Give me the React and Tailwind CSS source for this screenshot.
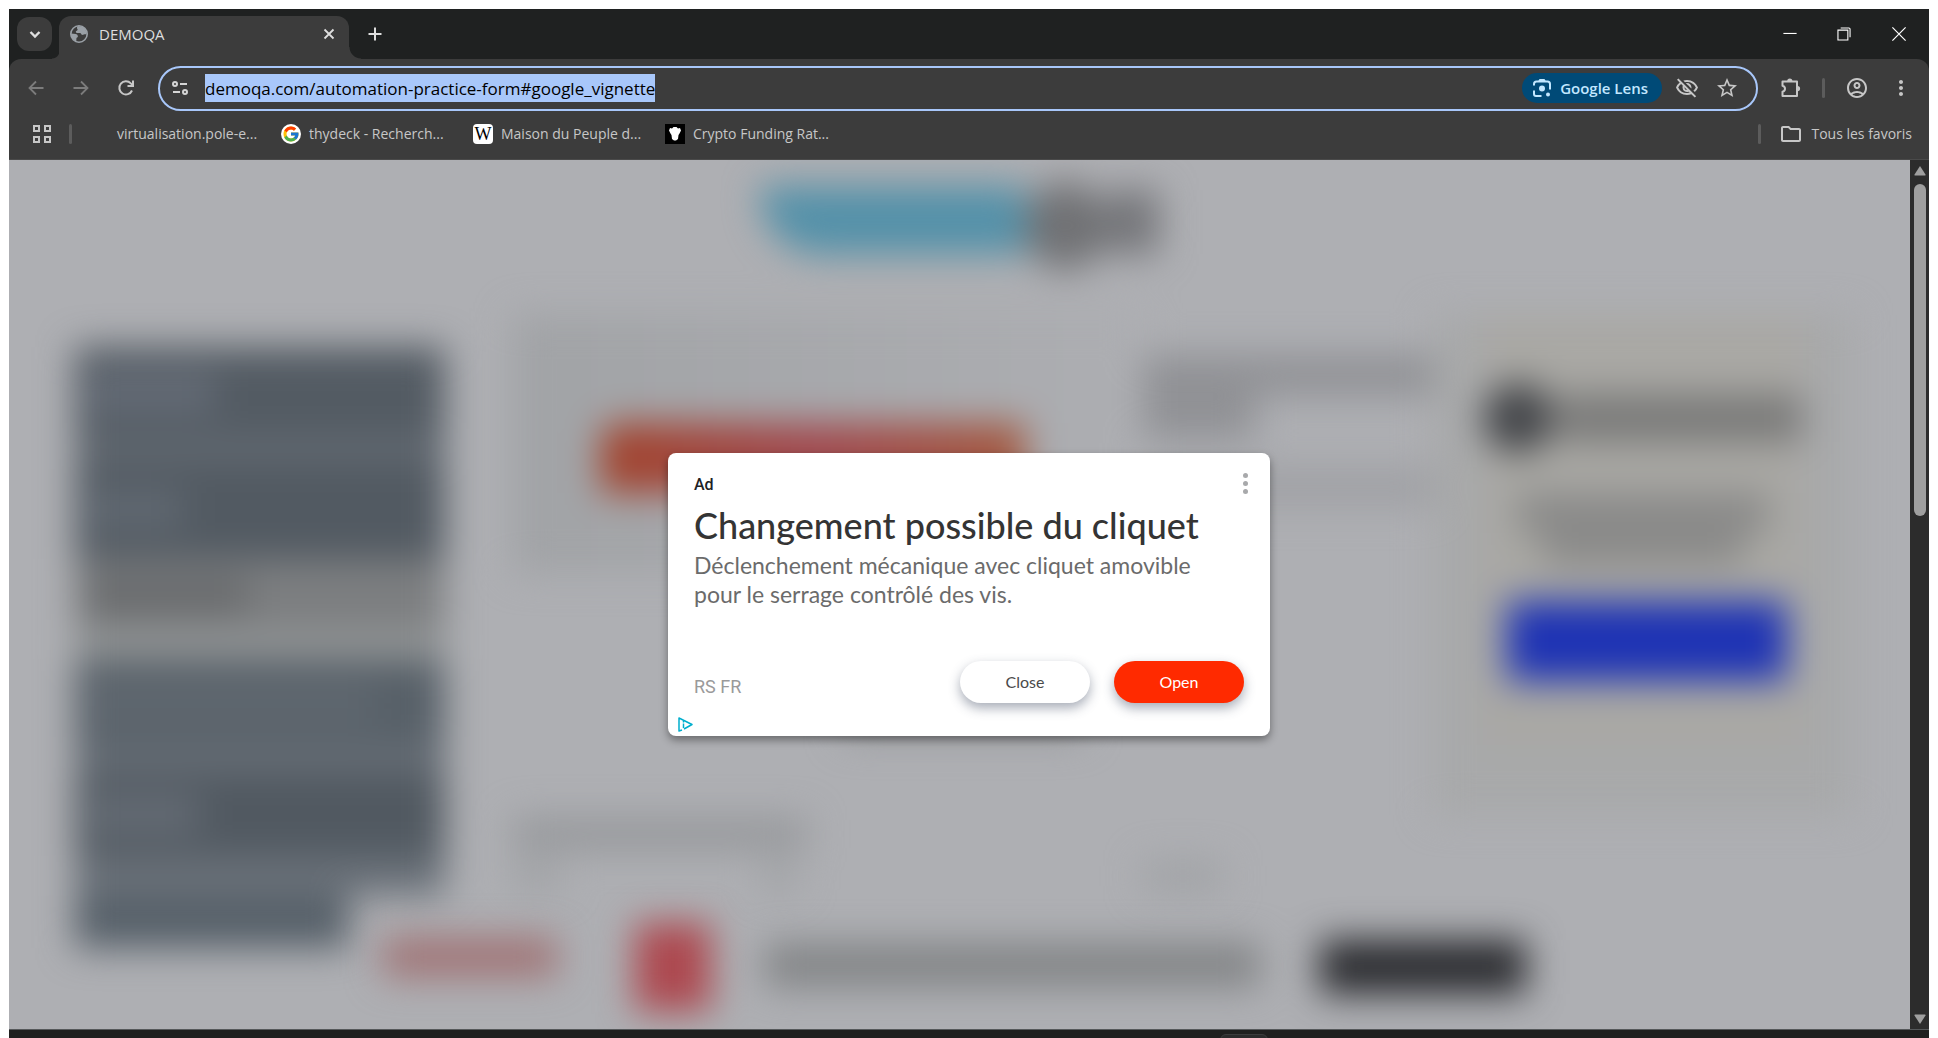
import React from "react";
import { FcGoogle } from "react-icons/fc";
import { MdMoreVert, MdOutlineAccountCircle, MdOutlineFolder, MdOutlineVisibilityOff, MdStarBorder } from "react-icons/md";

const ui = "font-['Open_Sans','Noto_Sans',sans-serif]";

function Line({ d, size = 20, w = 2, className = "" }) {
  return (
    <svg width={size} height={size} viewBox="0 0 20 20" fill="none" stroke="currentColor" strokeWidth={w} className={className} aria-hidden="true">
      <path d={d} />
    </svg>
  );
}

function Globe() {
  return (
    <svg width="18" height="18" viewBox="0 0 18 18" aria-hidden="true">
      <circle cx="9" cy="9" r="8.2" fill="#3c3c3c" stroke="#9aa0a6" strokeWidth="1.6" />
      <path fill="#9aa0a6" d="M8 1c-1 1-1.500 2-.6 3 .8.900-.4 1.600-1.200 2.100-.8.500-.2 1.900.8 1.900h3c1.200 0 1 1.500 2 1.800 1.300.4 2-.8 4.500-.4C17 4.500 13.500 1 8 1ZM1 8.500l4.500.5c1.500.2 2.500 1.200 2.400 2.600 0 1-1.400.8-1.500 2-.1.900.2 1.900-.2 3C3 15.500 1 12.500 1 8.500Z" />
    </svg>
  );
}

function Lens() {
  return (
    <svg width="20" height="20" viewBox="0 0 20 20" fill="none" stroke="currentColor" strokeWidth="2" aria-hidden="true">
      <path d="M2 7.500V6a2.500 2.500 0 0 1 2.500-2.500h11A2.500 2.500 0 0 1 18 6v5.500M2 12.500V16a2 2 0 0 0 2 2h5.500" />
      <path d="M6 3.500L7.500 1h5L14 3.500Z" fill="currentColor" stroke="none" />
      <circle cx="10" cy="10.500" r="3" fill="currentColor" stroke="none" />
      <circle cx="16" cy="16.500" r="2" fill="currentColor" stroke="none" />
    </svg>
  );
}

function Tune() {
  return (
    <svg width="18" height="18" viewBox="0 0 18 18" fill="none" stroke="#d5d5d5" strokeWidth="2" aria-hidden="true">
      <circle cx="4" cy="5" r="2" />
      <path d="M9 5h7M2 13h7" />
      <circle cx="14" cy="13" r="2" />
    </svg>
  );
}

function Sep() {
  return <span className="h-5 w-[3px] rounded-full bg-[#5c5c5c]" />;
}

function TabStrip() {
  return (
    <div className="flex h-[50px] bg-[#1f2121] pl-2 text-[#dedede]">
      <button aria-label="Rechercher dans les onglets" className="mt-2 flex h-[34px] w-[35px] items-center justify-center rounded-xl bg-[#3c3c3c]">
        <Line d="M5.500 8l4.500 4.500L14.500 8" w={2.4} />
      </button>
      <div className="flex items-end">
        <span className="h-2 w-[7px] bg-[radial-gradient(circle_at_0_0,transparent_7px,#3c3c3c_8px)]" />
        <div className="flex h-[43px] w-[290px] items-center rounded-t-xl bg-[#3c3c3c] pb-[7px] pl-[11px] pr-[10px]">
          <Globe />
          <span className="ml-[11px] flex-1 text-[15px] leading-5">DEMOQA</span>
          <button aria-label="Fermer l'onglet">
            <Line d="M5.500 5.500l9 9M14.500 5.500l-9 9" w={1.8} />
          </button>
        </div>
        <span className="h-3 w-3 bg-[radial-gradient(circle_at_100%_0,transparent_11px,#3c3c3c_12px)]" />
      </div>
      <button aria-label="Nouvel onglet" className="ml-1 h-[50px]">
        <Line d="M10 3.500v13M3.500 10h13" w={2} />
      </button>
      <div className="ml-auto flex h-[50px] gap-8 pr-[18px] text-white">
        <button aria-label="Réduire">
          <Line d="M4 9.500h12" w={1} size={22} />
        </button>
        <button aria-label="Restaurer">
          <Line d="M4.500 6.500h9v9h-9zM7 4.500h7.500q1 0 1 1V13" w={1} size={22} />
        </button>
        <button aria-label="Fermer">
          <Line d="M4.500 4.500l11 11M15.500 4.500l-11 11" w={1} size={24} />
        </button>
      </div>
    </div>
  );
}

function Toolbar() {
  return (
    <div className="flex h-[58px] items-center rounded-t-xl bg-[#3c3c3c] pl-[17px] pr-4 text-[#c7c7c7]">
      <div className="flex gap-[25px]">
        <button aria-label="Retour" className="text-[#7c7c7c]">
          <Line d="M17.500 10H4M10 3.500L3.500 10l6.500 6.500" w={1.8} />
        </button>
        <button aria-label="Avancer" className="text-[#7c7c7c]">
          <Line d="M2.500 10H16M10 3.500l6.500 6.500-6.500 6.500" w={1.8} />
        </button>
        <button aria-label="Actualiser">
          <Line d="M16 12.500A6.600 6.600 0 1 1 14.800 5.400L17 7.600M17 2.500V8h-5.500" w={2} />
        </button>
      </div>
      <div className="ml-[22px] flex h-[45px] flex-1 items-center rounded-full border-2 border-[#a8c7fa] pl-[11px] pr-[17px]">
        <button aria-label="Informations sur le site">
          <Tune />
        </button>
        <input
          aria-label="Adresse"
          readOnly
          value="demoqa.com/automation-practice-form#google_vignette"
          className="ml-4 h-7 bg-[#a8c7fa] text-[17px] text-black [field-sizing:content]"
        />
        <button className="ml-auto flex h-[30px] items-center gap-2 rounded-full bg-[#004a77] pl-[10px] pr-[14px] text-[15px] font-semibold text-[#c2e7ff]">
          <Lens />
          Google Lens
        </button>
        <button aria-label="Cookies tiers bloqués" className="ml-[13px]">
          <MdOutlineVisibilityOff size={24} />
        </button>
        <button aria-label="Ajouter aux favoris" className="ml-4">
          <MdStarBorder size={24} />
        </button>
      </div>
      <div className="ml-[22px] flex items-center">
        <button aria-label="Extensions">
          <svg width="22" height="22" viewBox="0 0 22 22" aria-hidden="true">
            <path d="M2.500 4.500h14.500v14.500H2.500v-4.200q2.500-.6 2.500-3t-2.500-3Z" fill="none" stroke="currentColor" strokeWidth="2" strokeLinejoin="round" />
            <path d="M7.200 4a2.600 2.600 0 0 1 5.200 0ZM17.500 9a2.600 2.600 0 0 1 0 5.200Z" fill="currentColor" />
          </svg>
        </button>
        <span className="mx-5 flex">
          <Sep />
        </span>
        <button aria-label="Profil">
          <MdOutlineAccountCircle size={24} />
        </button>
        <button aria-label="Menu" className="ml-5">
          <MdMoreVert size={24} />
        </button>
      </div>
    </div>
  );
}

function Bookmarks() {
  return (
    <nav className="flex h-[43px] items-center border-b border-[#4a4a4a] bg-[#3c3c3c] pl-6 pr-[17px] pb-[9px] text-[14px] text-[#c7c7c7]">
      <button aria-label="Applications">
        <svg width="18" height="18" viewBox="0 0 18 18" fill="none" stroke="currentColor" strokeWidth="2" aria-hidden="true">
          <path d="M1 1h5v5H1zM12 1h5v5h-5zM1 12h5v5H1zM12 12h5v5h-5z" />
        </svg>
      </button>
      <span className="ml-[18px] flex"><Sep /></span>
      <div className="ml-[45px] flex gap-6">
        <a href="#" className="w-[140px] whitespace-nowrap">virtualisation.pole-e...</a>
        <a href="#" className="flex items-center gap-2">
          <span className="flex size-5 items-center justify-center rounded-full bg-white"><FcGoogle size={18} /></span>
          <span className="w-[140px] whitespace-nowrap">thydeck - Recherch...</span>
        </a>
        <a href="#" className="flex items-center gap-2">
          <span className="flex size-5 items-center justify-center rounded-sm bg-white font-['Liberation_Serif',serif] text-[18px] leading-5 text-black">W</span>
          <span className="w-[140px] whitespace-nowrap">Maison du Peuple d...</span>
        </a>
        <a href="#" className="flex items-center gap-2">
          <svg width="20" height="20" viewBox="0 0 20 20" aria-hidden="true">
            <path fill="#000" d="M0 0h20v20H0z" />
            <path fill="#fff" d="M5 4l2 .5 1.500-1.500h3L13 4.500l2-.5 1 2.500-1.500 3-1 1.500-.5 4-2 1.500H9L7 15l-.5-4-1-1.500L4 6.500Z" />
          </svg>
          <span className="w-[140px] whitespace-nowrap">Crypto Funding Rat...</span>
        </a>
      </div>
      <div className="ml-auto flex items-center">
        <Sep />
        <a href="#" className="ml-[18px] flex items-center gap-2">
          <MdOutlineFolder size={24} />
          Tous les favoris
        </a>
      </div>
    </nav>
  );
}

function MenuBlock({ light, className }) {
  return (
    <div className={"flex w-full flex-col justify-center pl-3 " + className}>
      <div className={"h-9 " + light} />
    </div>
  );
}

function BlurredPage() {
  return (
    <div aria-hidden="true" className="absolute inset-0 overflow-hidden bg-[#aeafb3]">
      <div className="h-full w-full blur-[18px]">
        <div className="flex h-[155px] justify-center pt-[22px]">
          <div className="mt-1 h-[68px] w-[264px] rounded-bl-[60px] bg-[#5491a9]" />
          <div className="h-[88px] w-20 rounded-full bg-[#707174]" />
          <div className="mt-2 h-[64px] w-[54px] bg-[#75767a]" />
        </div>
        <div className="flex pl-[66px]">
          <div className="mt-8 w-[370px]">
            <div className="bg-[#676e76]">
              <MenuBlock className="h-[92px] bg-[#535b63]" light="w-32 bg-[#666d78]" />
              <div className="h-5" />
              <MenuBlock className="h-[100px] bg-[#525a62]" light="w-24 bg-[#626a73]" />
            </div>
            <MenuBlock className="h-[72px] bg-[#7c7e80]" light="w-40 bg-[#686a6c]" />
            <div className="h-7 bg-[#96999a]" />
            <div className="bg-[#6a7179]">
              <MenuBlock className="h-[88px] bg-[#576068]" light="w-72 bg-[#606870]" />
              <div className="h-6" />
              <MenuBlock className="h-[85px] bg-[#515961]" light="w-28 bg-[#666d76]" />
              <div className="h-10" />
            </div>
            <div className="h-[52px] w-[274px] bg-[#566069]" />
          </div>
          <div className="ml-[68px] w-[920px]">
            <div className="flex">
              <div className="h-[258px] w-[630px] bg-linear-to-r from-[#a1a3a6] to-[#adaeb2] pl-[88px] pt-[108px]">
                <div className="h-[70px] w-[424px] rounded-tl-2xl bg-linear-to-r from-[#a2442c] via-[#a14a50] to-[#a35a40]" />
              </div>
              <div className="pt-10">
                <div className="h-10 w-[290px] bg-[#909195]" />
                <div className="h-11 w-28 bg-[#909195]" />
                <div className="mt-7 h-10 w-[290px] bg-[#a0a1a5]" />
              </div>
            </div>
            <div className="ml-[330px] mt-[136px] h-7 w-60 bg-[#96989b]" />
            <div className="mt-[81px] h-8 w-[294px] bg-[#96989b]" />
            <div className="mt-3 flex pr-[210px]">
              <div className="h-7 w-12 bg-[#a0a2a5]" />
              <div className="ml-[200px] h-7 w-9 bg-[#a0a2a5]" />
              <div className="ml-auto h-7 w-20 bg-[#a0a2a5]" />
            </div>
          </div>
          <div className="h-[500px] w-[420px] bg-[#a8a9aa]">
            <div className="ml-[50px] h-[430px] w-[320px] bg-[#a9a8a4]">
              <div className="flex items-center pt-[68px]">
                <div className="size-[70px] rounded-full bg-[#44464a]" />
                <div className="ml-1 h-[48px] w-[245px] bg-[#7a7a79]" />
              </div>
              <div className="mx-auto mt-10 h-10 w-[250px] bg-[#8a8a89]" />
              <div className="mx-auto h-8 w-[200px] bg-[#8a8a89]" />
              <div className="ml-6 mt-9 h-[80px] w-[280px] bg-[#1e33b4]" />
            </div>
          </div>
        </div>
      </div>
      <div className="absolute inset-x-0 bottom-0 flex h-36 items-center blur-[18px]">
        <div className="ml-[374px] h-10 w-[174px] bg-[#a07476]" />
        <div className="ml-[78px] mt-5 h-[88px] w-[76px] bg-[#ad484f]" />
        <div className="ml-[54px] mt-4 h-[44px] w-[495px] bg-[#838587]" />
        <div className="ml-[60px] mt-5 h-[54px] w-[206px] bg-[#2b2c30]" />
      </div>
    </div>
  );
}

function AdCard() {
  return (
    <section className="flex h-[283px] w-[602px] flex-col rounded-lg bg-white px-[26px] font-['Lato',sans-serif] shadow-[0_4px_8px_rgba(0,0,0,0.4)]">
      <div className="flex items-start justify-between pt-5">
        <span className="font-['Roboto',sans-serif] text-base leading-6 font-medium text-[#202124]">Ad</span>
        <button aria-label="Options" className="-mr-1 flex flex-col gap-[3px]">
          <span className="size-[5px] rounded-full bg-[#a8a9ab]" />
          <span className="size-[5px] rounded-full bg-[#a8a9ab]" />
          <span className="size-[5px] rounded-full bg-[#a8a9ab]" />
        </button>
      </div>
      <h1 className="mt-1 text-[36px] leading-[48px] font-medium whitespace-nowrap text-[#343434]">Changement possible du cliquet</h1>
      <p className="mt-[2px] pr-8 text-[23px] leading-[29px] text-[#6b6b6b]">
        Déclenchement mécanique avec cliquet amovible pour le serrage contrôlé des vis.
      </p>
      <div className="mt-auto flex items-center gap-6">
        <span className="mt-2 mr-auto font-['Roboto',sans-serif] text-[18px] text-[#9a9a9a]">RS FR</span>
        <button className="h-[42px] w-[130px] rounded-full bg-white text-base text-[#4a4a4a] shadow-[0_5px_12px_rgba(60,70,95,0.45)]">Close</button>
        <button className="h-[42px] w-[130px] rounded-full bg-[#ff2a00] text-base text-white shadow-[0_5px_12px_rgba(60,70,95,0.45)]">Open</button>
      </div>
      <div className="-ml-4 flex h-[33px] items-end pb-1">
        <svg width="15" height="15" viewBox="0 0 15 15" fill="none" stroke="#00aecd" strokeWidth="1.5" strokeLinejoin="round" aria-hidden="true">
          <path d="M4 13l-3 1V1l13 6.500L6 12" />
          <path d="M5.500 6.500V11M5.500 4v1.500" />
        </svg>
      </div>
    </section>
  );
}

export default function App() {
  return (
    <div className={"flex min-h-screen flex-col bg-white px-[9px] pt-[9px] " + ui}>
      <header className="bg-[#1f2121]">
        <TabStrip />
        <Toolbar />
        <Bookmarks />
      </header>
      <main className="relative flex min-h-[600px] flex-1">
        <div className="relative flex-1">
          <BlurredPage />
        </div>
        <div aria-hidden="true" className="flex w-[19px] flex-col items-center bg-[#2c2c2c]">
          <svg width="12" height="24" viewBox="0 0 12 24"><path fill="#9f9f9f" d="M6 6l5.500 8.500q.5 1-.5 1H1q-1 0-.5-1Z" /></svg>
          <div className="h-[332px] w-3 rounded-full bg-[#9f9f9f]" />
          <svg width="12" height="24" viewBox="0 0 12 24" className="mt-auto"><path fill="#9f9f9f" d="M6 19L.5 10.500q-.5-1 .5-1h10q1 0 .5 1Z" /></svg>
        </div>
        <div className="absolute inset-0 grid place-items-center">
          <AdCard />
        </div>
      </main>
      <footer className="flex h-[9px] justify-center overflow-hidden border-t border-[#55585a] bg-[#20201f]">
        <span className="mt-1 ml-[550px] h-4 w-12 rounded-md border border-[#3d3d3d] bg-[#2c2c2c]" />
      </footer>
    </div>
  );
}
